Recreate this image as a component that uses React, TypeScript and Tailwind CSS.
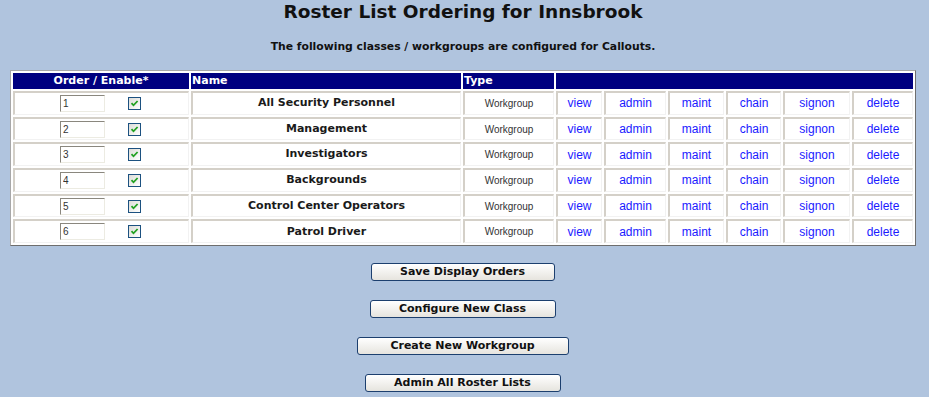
import React from "react";

type Grupo = {
  ordem: string;
  nome: string;
  tipo: string;
};

const grupos: Grupo[] = [
  { ordem: "1", nome: "All Security Personnel", tipo: "Workgroup" },
  { ordem: "2", nome: "Management", tipo: "Workgroup" },
  { ordem: "3", nome: "Investigators", tipo: "Workgroup" },
  { ordem: "4", nome: "Backgrounds", tipo: "Workgroup" },
  { ordem: "5", nome: "Control Center Operators", tipo: "Workgroup" },
  { ordem: "6", nome: "Patrol Driver", tipo: "Workgroup" },
];

const acoes = [
  { rotulo: "view", largura: "w-[46px]" },
  { rotulo: "admin", largura: "w-[62px]" },
  { rotulo: "maint", largura: "w-[56px]" },
  { rotulo: "chain", largura: "w-[55px]" },
  { rotulo: "signon", largura: "w-[67px]" },
  { rotulo: "delete", largura: "w-[61px]" },
];

const botoes = [
  { texto: "Save Display Orders", largura: "w-[184px]" },
  { texto: "Configure New Class", largura: "w-[186px]" },
  { texto: "Create New Workgroup", largura: "w-[212px]" },
  { texto: "Admin All Roster Lists", largura: "w-[196px]" },
];

const celula =
  "h-[23.7px] border-t-2 border-l-2 border-b border-r border-t-[#d4d0c8] border-l-[#d4d0c8] border-b-[#f2f2f2] border-r-[#f2f2f2] p-0 align-middle";

function Caixinha() {
  return (
    <span className="inline-flex h-[13px] w-[13px] items-center justify-center border border-[#1c5180] bg-gradient-to-br from-[#dcdcd7] to-white">
      <svg width="9" height="9" viewBox="0 0 9 9">
        <path
          d="M1.5 4.2 L3.5 6.3 L7.6 2"
          fill="none"
          stroke="#21a121"
          strokeWidth="1.8"
        />
      </svg>
    </span>
  );
}

export default function App() {
  return (
    <div className="flex min-h-screen flex-col bg-[#b0c4de] font-['DejaVu_Sans',sans-serif] text-[#111]">
      <h1 className="mt-[1px] pr-[3px] text-center text-[18.5px] leading-[22px] font-bold">
        Roster List Ordering for Innsbrook
      </h1>
      <p className="mt-[17px] pr-[3px] text-center text-[10.8px] leading-[14px] font-bold">
        The following classes / workgroups are configured for Callouts.
      </p>

      <table className="mt-[16px] ml-[10px] w-[906px] table-fixed border-separate border-spacing-[2px] border border-t-[#a8a8a8] border-l-[#a8a8a8] border-r-[#6e6e6e] border-b-[#6e6e6e] bg-white">
        <colgroup>
          <col className="w-[176px]" />
          <col className="w-[270px]" />
          <col className="w-[91px]" />
          {acoes.map((a) => (
            <col key={a.rotulo} className={a.largura} />
          ))}
        </colgroup>
        <thead>
          <tr className="bg-[#000080] text-[11px] leading-[14px] font-bold text-white">
            <th className="h-[16px] p-0 text-center">Order / Enable*</th>
            <th className="p-0 pl-[1px] text-left">Name</th>
            <th className="p-0 pl-[1px] text-left">Type</th>
            <th colSpan={6} className="p-0"></th>
          </tr>
        </thead>
        <tbody>
          {grupos.map((g) => (
            <tr key={g.ordem}>
              <td className={celula}>
                <div className="flex items-center pl-[45px]">
                  <input
                    readOnly
                    value={g.ordem}
                    className="h-[17px] w-[45px] border border-t-[#8a877e] border-l-[#8a877e] border-b-[#ecebe2] border-r-[#ecebe2] bg-white pl-[2px] font-['Liberation_Sans',sans-serif] text-[10px] text-[#333] outline-none"
                  />
                  <span className="ml-[23px] flex">
                    <Caixinha />
                  </span>
                </div>
              </td>
              <td className={`${celula} text-center text-[11px] font-bold text-[#1a1a1a]`}>
                {g.nome}
              </td>
              <td className={`${celula} text-center font-['Liberation_Sans',sans-serif] text-[10px] text-[#333]`}>
                {g.tipo}
              </td>
              {acoes.map((a) => (
                <td
                  key={a.rotulo}
                  className={`${celula} text-center font-['Liberation_Sans',sans-serif] text-[12px]`}
                >
                  <a href="#" className="text-[#1a1aff] no-underline">
                    {a.rotulo}
                  </a>
                </td>
              ))}
            </tr>
          ))}
        </tbody>
      </table>

      <div className="mt-[17px] flex flex-col items-center gap-[19px] pr-[4px] pb-[6px]">
        {botoes.map((b) => (
          <button
            key={b.texto}
            className={`${b.largura} h-[18px] rounded-[3px] border border-[#1c3f6e] bg-gradient-to-b from-white to-[#e6e4de] text-[11px] leading-[16px] font-bold text-[#111]`}
          >
            {b.texto}
          </button>
        ))}
      </div>
    </div>
  );
}
